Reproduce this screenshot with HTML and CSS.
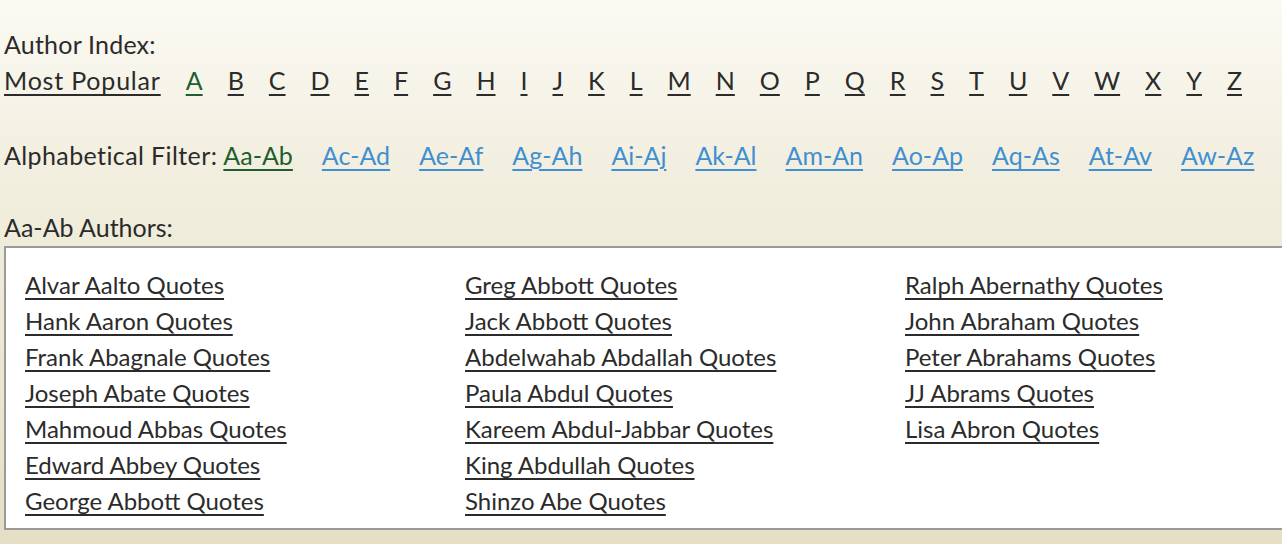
FILE: index.html
```html
<!DOCTYPE html>
<html>
<head>
<meta charset="utf-8">
<link rel="stylesheet" href="styles.css">
</head>
<body>
<div class="page">
  <div class="author-index">
    <div class="label">Author Index:</div>
    <div class="letters">
      <a href="#" class="popular">Most Popular</a>
      <a href="#" class="current">A</a>
      <a href="#">B</a><a href="#">C</a><a href="#">D</a><a href="#">E</a><a href="#">F</a><a href="#">G</a><a href="#">H</a><a href="#">I</a><a href="#">J</a><a href="#">K</a><a href="#">L</a><a href="#">M</a><a href="#">N</a><a href="#">O</a><a href="#">P</a><a href="#">Q</a><a href="#">R</a><a href="#">S</a><a href="#">T</a><a href="#">U</a><a href="#">V</a><a href="#">W</a><a href="#">X</a><a href="#">Y</a><a href="#">Z</a>
    </div>
  </div>
  <div class="filter">
    <span class="label">Alphabetical Filter:</span>
    <a href="#" class="current">Aa-Ab</a>
    <a href="#">Ac-Ad</a>
    <a href="#">Ae-Af</a>
    <a href="#">Ag-Ah</a>
    <a href="#">Ai-Aj</a>
    <a href="#">Ak-Al</a>
    <a href="#">Am-An</a>
    <a href="#">Ao-Ap</a>
    <a href="#">Aq-As</a>
    <a href="#">At-Av</a>
    <a href="#">Aw-Az</a>
  </div>
  <div class="authors-title">Aa-Ab Authors:</div>
  <div class="authors-box">
    <ul class="col">
      <li><a href="#">Alvar Aalto Quotes</a></li>
      <li><a href="#">Hank Aaron Quotes</a></li>
      <li><a href="#">Frank Abagnale Quotes</a></li>
      <li><a href="#">Joseph Abate Quotes</a></li>
      <li><a href="#">Mahmoud Abbas Quotes</a></li>
      <li><a href="#">Edward Abbey Quotes</a></li>
      <li><a href="#">George Abbott Quotes</a></li>
    </ul>
    <ul class="col">
      <li><a href="#">Greg Abbott Quotes</a></li>
      <li><a href="#">Jack Abbott Quotes</a></li>
      <li><a href="#">Abdelwahab Abdallah Quotes</a></li>
      <li><a href="#">Paula Abdul Quotes</a></li>
      <li><a href="#">Kareem Abdul-Jabbar Quotes</a></li>
      <li><a href="#">King Abdullah Quotes</a></li>
      <li><a href="#">Shinzo Abe Quotes</a></li>
    </ul>
    <ul class="col">
      <li><a href="#">Ralph Abernathy Quotes</a></li>
      <li><a href="#">John Abraham Quotes</a></li>
      <li><a href="#">Peter Abrahams Quotes</a></li>
      <li><a href="#">JJ Abrams Quotes</a></li>
      <li><a href="#">Lisa Abron Quotes</a></li>
    </ul>
  </div>
</div>
</body>
</html>
```

FILE: styles.css
```css
html, body {
  margin: 0;
  padding: 0;
  height: 100%;
}
body {
  background: linear-gradient(to bottom, #fbfaf3 0%, #f2efe0 30%, #e4dfc4 100%);
  font-family: Lato, "Noto Sans", sans-serif;
  font-size: 24px;
  line-height: 36px;
  color: #2b2b2b;
  overflow: hidden;
}
.page {
  padding: 26px 0 0 4px;
}
a {
  color: #2b2b2b;
  text-decoration: underline;
  text-underline-offset: 4px;
  text-decoration-thickness: 2px;
}
.author-index,
.filter,
.authors-title {
  font-size: 25px;
}
.author-index .label {
  letter-spacing: 0.2px;
}
.letters {
  display: flex;
  gap: 25px;
  white-space: nowrap;
}
.letters a.popular {
  letter-spacing: 0.8px;
}
.letters a.current,
.filter a.current {
  color: #1d5e2c;
}
.filter {
  margin-top: 39px;
  display: flex;
  gap: 29px;
  white-space: nowrap;
}
.filter .label {
  letter-spacing: 0.4px;
  margin-right: -23px;
}
.filter a {
  color: #3f8fd2;
}
.authors-title {
  margin-top: 36px;
}
.authors-box {
  margin-top: 1px;
  background: #fff;
  border: 2px solid #9a9a9a;
  border-right: none;
  display: flex;
  padding: 19px 0 9px 19px;
}
.col {
  list-style: none;
  margin: 0;
  padding: 0;
  width: 440px;
  flex: none;
}
.col li {
  line-height: 36px;
}
```
